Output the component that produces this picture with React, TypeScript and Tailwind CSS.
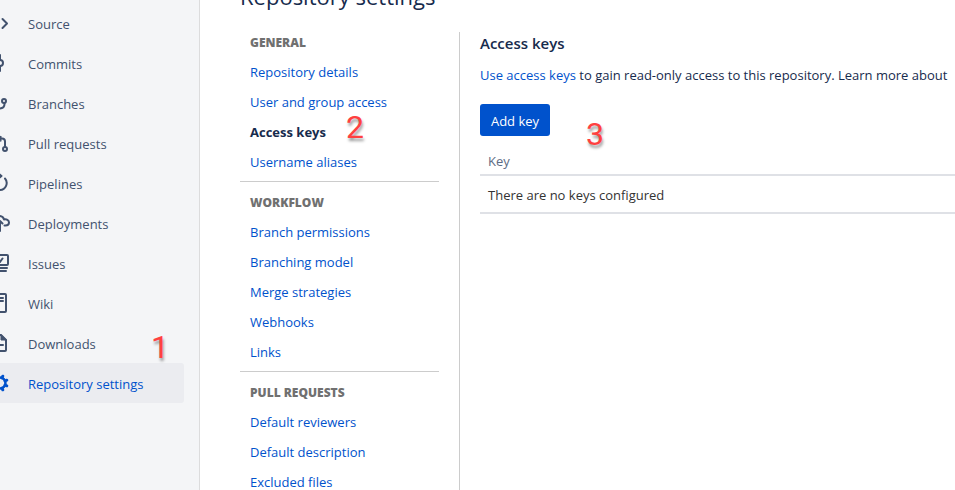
import type { ReactNode } from "react";

interface NavItem {
  label: string;
  icon: ReactNode;
  active?: boolean;
}

const navItems: NavItem[] = [
  {
    label: "Source",
    icon: <path d="M14.5 8l4.5 4.5-4.5 4.5" />,
  },
  {
    label: "Commits",
    icon: (
      <>
        <circle cx="12" cy="12" r="3" />
        <path d="M12 4v5M12 15v5" />
      </>
    ),
  },
  {
    label: "Branches",
    icon: (
      <>
        <circle cx="16" cy="10" r="2" />
        <path d="M16.5 12v1c0 3-2 4.5-5.5 4.5" />
      </>
    ),
  },
  {
    label: "Pull requests",
    icon: (
      <>
        <circle cx="17" cy="18" r="2" />
        <path d="M17 16v-5.5a3 3 0 0 0-3-3h-2" />
        <path d="M10 7.5l3-2.5v5z" fill="currentColor" strokeWidth="1" />
      </>
    ),
  },
  {
    label: "Pipelines",
    icon: (
      <>
        <path d="M17 7.5a7 7 0 0 1-5 11.5" />
        <path d="M11 3l2.5 2-2.5 2z" fill="currentColor" />
      </>
    ),
  },
  {
    label: "Deployments",
    icon: (
      <>
        <path d="M11 5c3 0 4.5 1.5 5 3.5 2.500-.5 5 .5 5 3s-1.500 3-3.500 3h-1" />
        <path d="M12 20V10l2.5 2.5" />
      </>
    ),
  },
  {
    label: "Issues",
    icon: (
      <>
        <rect x="4" y="4" width="16" height="10" rx="1" />
        <path d="M10 9l2 2 2.5-3.5M4 17h15M6 20h12" />
      </>
    ),
  },
  {
    label: "Wiki",
    icon: (
      <>
        <rect x="6" y="3" width="12" height="18" rx="1" />
        <path d="M10 7h5M10 10h5" />
      </>
    ),
  },
  {
    label: "Downloads",
    icon: (
      <>
        <path d="M11 4h2l5 5v10a1 1 0 0 1-1 1H6" />
        <path d="M13 4v5h5z" fill="currentColor" strokeWidth="1" />
        <path d="M10 14h5" />
      </>
    ),
  },
  {
    label: "Repository settings",
    active: true,
    icon: (
      <>
        <circle cx="12" cy="12" r="5.5" strokeWidth="2.5" />
        <path
          d="M17 10l1.8-.8M17 14l1.8.8M14 7l.8-1.8M14 17l.8 1.8"
          strokeWidth="3"
        />
      </>
    ),
  },
];

const settingsGroups = [
  {
    title: "General",
    links: [
      "Repository details",
      "User and group access",
      "Access keys",
      "Username aliases",
    ],
  },
  {
    title: "Workflow",
    links: [
      "Branch permissions",
      "Branching model",
      "Merge strategies",
      "Webhooks",
      "Links",
    ],
  },
  {
    title: "Pull requests",
    links: ["Default reviewers", "Default description", "Excluded files"],
  },
];

const NavIcon = ({ children }: { children: ReactNode }) => (
  <svg
    viewBox="12 0 12 24"
    className="h-6 w-3 shrink-0"
    fill="none"
    stroke="currentColor"
    strokeWidth="2"
    strokeLinecap="round"
    strokeLinejoin="round"
    aria-hidden="true"
  >
    {children}
  </svg>
);

const Marker = ({ value, className }: { value: string; className: string }) => (
  <span
    className={`pointer-events-none absolute font-['Roboto',sans-serif] text-[32px] leading-8 text-[#ff4040] [text-shadow:1px_3px_3px_rgba(0,0,0,0.4)] ${className}`}
  >
    {value}
  </span>
);

const Sidebar = () => (
  <nav className="w-[200px] shrink-0 border-r border-[#dcdcdd] bg-[#f4f5f7] pt-[3px] pr-[15px]">
    {navItems.map((item) => (
      <a
        key={item.label}
        href="#"
        className={
          item.active
            ? "flex h-10 items-center gap-4 rounded-r-[3px] bg-[#ebecf0] text-[#0052cc]"
            : "flex h-10 items-center gap-4 text-[#42526e]"
        }
      >
        <NavIcon>{item.icon}</NavIcon>
        <span className="pt-1">{item.label}</span>
      </a>
    ))}
  </nav>
);

const SettingsNav = () => (
  <nav className="w-[220px] shrink-0 border-r border-[#ccc] pr-5">
    {settingsGroups.map((group) => (
      <section
        key={group.title}
        className="border-b border-[#ccc] pb-1 pl-2.5 not-first:pt-2.5 last:border-b-0"
      >
        <h2 className="mb-[3px] text-xs leading-[22px] font-extrabold text-[#707070] uppercase">
          {group.title}
        </h2>
        <ul>
          {group.links.map((link) => (
            <li key={link} className="leading-[30px]">
              <a
                href="#"
                className={
                  link === "Access keys"
                    ? "font-bold text-[#172b4d]"
                    : "text-[#0052cc]"
                }
              >
                {link}
              </a>
            </li>
          ))}
        </ul>
      </section>
    ))}
  </nav>
);

const AccessKeys = () => (
  <section className="min-w-0 flex-1 overflow-hidden pl-5">
    <h2 className="text-[15px] leading-[22px] font-semibold">Access keys</h2>
    <p className="mt-2.5 leading-[22px] whitespace-nowrap">
      <a href="#" className="text-[#0052cc]">
        Use access keys
      </a>{" "}
      to gain read-only access to this repository. Learn more about
    </p>
    <button
      type="button"
      className="mt-[18px] h-8 min-w-[70px] rounded-[3px] bg-[#0052cc] px-2.5 pt-1 text-white"
    >
      Add key
    </button>
    <table className="mt-3 w-full border-collapse text-left">
      <thead>
        <tr className="border-b-2 border-[#dfe1e6]">
          <th className="h-[27px] px-2 pt-0.5 font-medium text-[#5e6c84]">
            Key
          </th>
        </tr>
      </thead>
      <tbody>
        <tr className="border-b-2 border-[#dfe1e6]">
          <td className="h-[38px] px-2 pt-1 text-[#333]">
            There are no keys configured
          </td>
        </tr>
      </tbody>
    </table>
  </section>
);

const App = () => {
  return (
    <div className="relative flex h-screen overflow-hidden bg-white font-['Open_Sans',sans-serif] text-[13px] text-[#172b4d]">
      <Sidebar />
      <main className="min-w-0 flex-1 pl-10">
        <div className="flex h-8 flex-col justify-end overflow-hidden pb-5">
          <h1 className="text-[22px] leading-8">Repository settings</h1>
        </div>
        <div className="flex h-screen">
          <SettingsNav />
          <AccessKeys />
        </div>
      </main>
      <Marker value="1" className="top-[331px] left-[151px]" />
      <Marker value="2" className="top-[111px] left-[346px]" />
      <Marker value="3" className="top-[118px] left-[586px]" />
    </div>
  );
};

export default App;
